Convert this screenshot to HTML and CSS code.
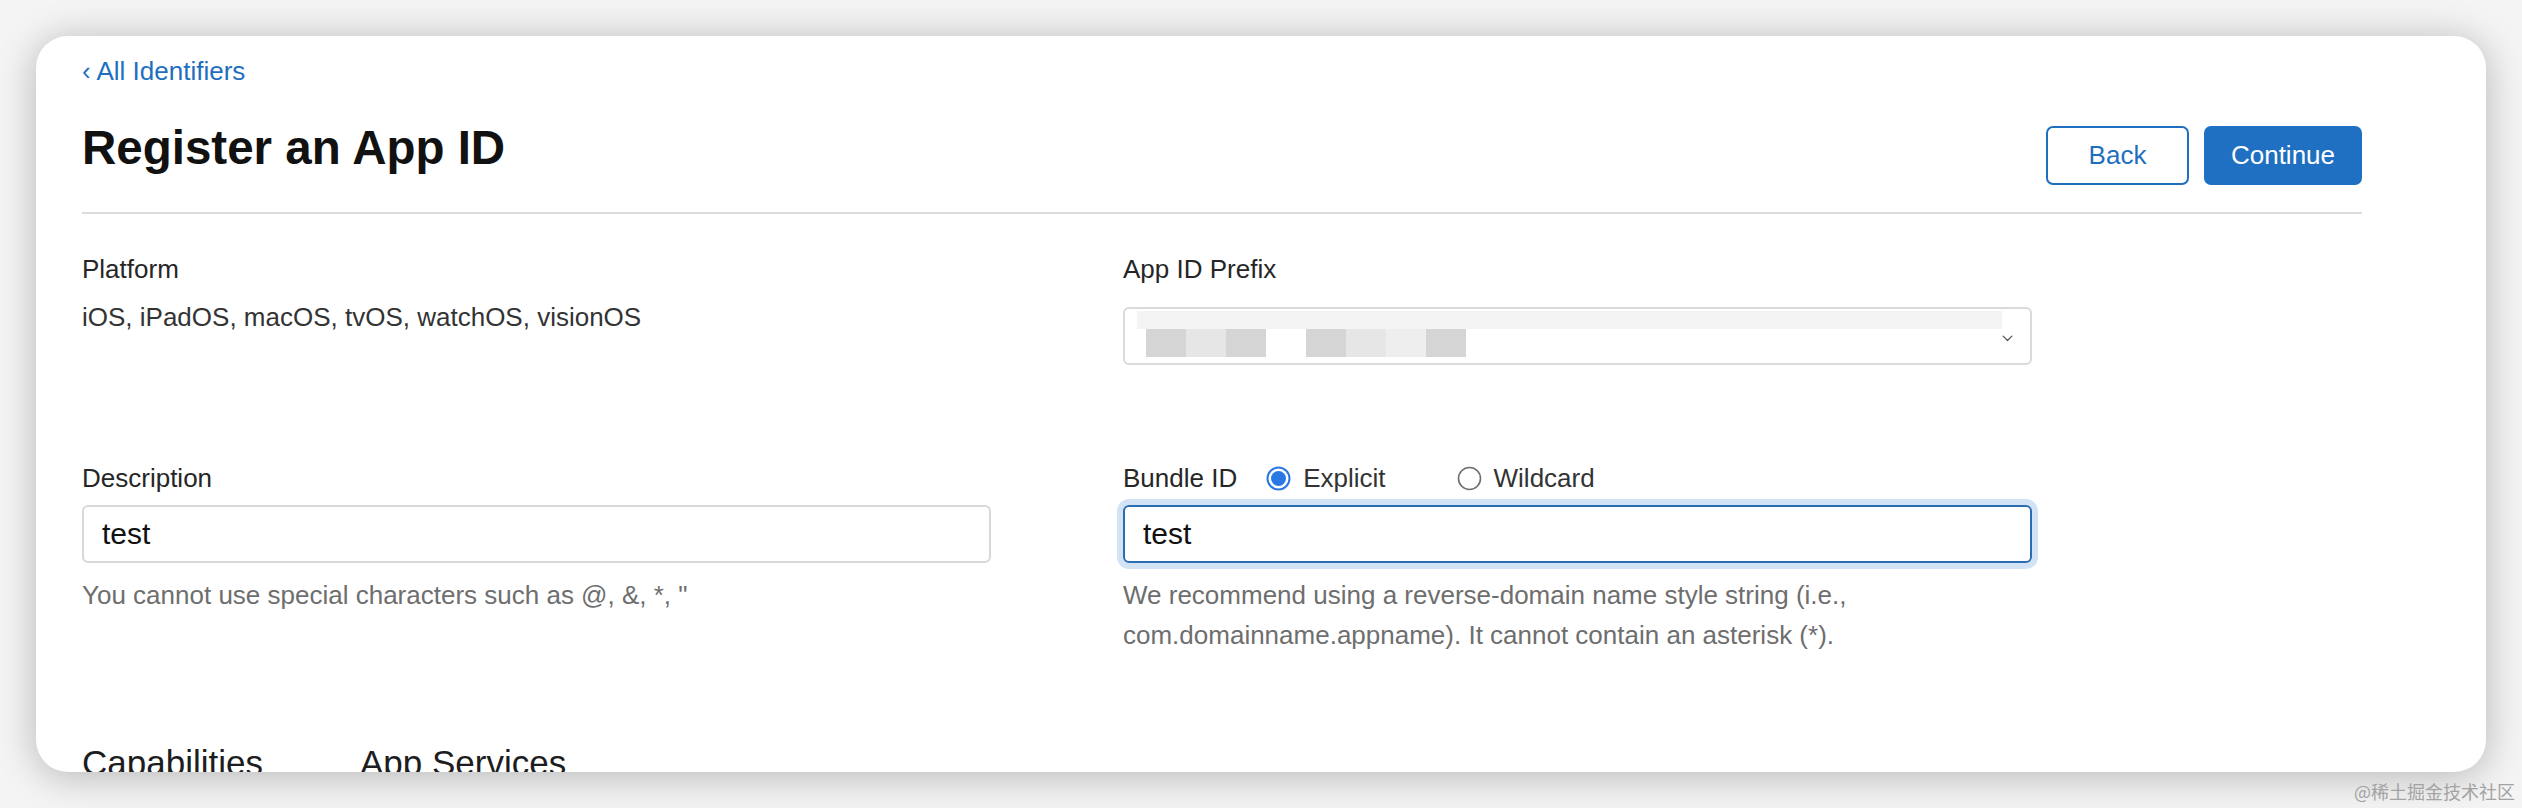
FILE: index.html
```html
<!DOCTYPE html>
<html lang="en">
<head>
<meta charset="utf-8">
<title>Register an App ID</title>
<link rel="stylesheet" href="styles.css">
</head>
<body>
<main class="card">
  <a class="back-link" href="#">&#8249; All Identifiers</a>
  <div class="head">
    <h1 class="title">Register an App ID</h1>
    <div class="actions">
      <button class="btn btn-back">Back</button>
      <button class="btn btn-continue">Continue</button>
    </div>
  </div>
  <div class="divider"></div>

  <div class="form">
    <div class="field">
      <div class="label">Platform</div>
      <div class="value">iOS, iPadOS, macOS, tvOS, watchOS, visionOS</div>
    </div>
    <div class="field">
      <div class="label">App ID Prefix</div>
      <div class="select">
        <div class="redacted">
          <div class="stripe"></div>
          <div class="blocks">
            <span class="blk dark"></span><span class="blk light"></span><span class="blk dark"></span><span class="blk none"></span><span class="blk dark"></span><span class="blk light"></span><span class="blk lighter"></span><span class="blk dark"></span>
          </div>
        </div>
        <svg class="chev" width="14" height="9" viewBox="0 0 14 9"><path d="M1.5 1.5 L7 7 L12.5 1.5" fill="none" stroke="#555" stroke-width="1.6" stroke-linecap="round" stroke-linejoin="round"/></svg>
      </div>
    </div>

    <div class="field">
      <div class="label">Description</div>
      <div class="input">test</div>
      <div class="help">You cannot use special characters such as @, &amp;, *, "</div>
    </div>
    <div class="field">
      <div class="label-row">
        <span class="label">Bundle ID</span>
        <span class="radio radio-first">
          <svg width="25" height="25" viewBox="0 0 25 25"><circle cx="12.5" cy="12.5" r="11" fill="#fff" stroke="#2a78e4" stroke-width="2"/><circle cx="12.5" cy="12.5" r="7.5" fill="#2a78e4"/></svg>
          <span class="radio-text">Explicit</span>
        </span>
        <span class="radio radio-second">
          <svg width="25" height="25" viewBox="0 0 25 25"><circle cx="12.5" cy="12.5" r="11" fill="#fff" stroke="#6f6f6f" stroke-width="1.6"/></svg>
          <span class="radio-text">Wildcard</span>
        </span>
      </div>
      <div class="input input-focus">test</div>
      <div class="help">We recommend using a reverse-domain name style string (i.e.,<br>com.domainname.appname). It cannot contain an asterisk (*).</div>
    </div>
  </div>

  <div class="tabs">
    <span class="tab">Capabilities</span>
    <span class="tab">App Services</span>
  </div>
</main>
<div class="watermark">@稀土掘金技术社区</div>
</body>
</html>
```

FILE: styles.css
```css
html, body {
  margin: 0;
  padding: 0;
}

body {
  width: 2522px;
  height: 808px;
  overflow: hidden;
  position: relative;
  background: #f4f4f4;
  font-family: "Liberation Sans", Arial, "Noto Sans CJK SC", sans-serif;
  color: #333;
}

.card {
  display: block;
  box-sizing: border-box;
  margin: 36px 0 0 36px;
  width: 2450px;
  height: 736px;
  padding: 19px 124px 0 46px;
  background: #fff;
  border-radius: 32px;
  box-shadow: 0 4px 38px rgba(0, 0, 0, 0.26);
  overflow: hidden;
}

.back-link {
  display: block;
  width: max-content;
  font-size: 26px;
  line-height: 32px;
  color: #1f6fbf;
  text-decoration: none;
}

.head {
  display: flex;
  justify-content: space-between;
  align-items: flex-start;
  margin-top: 37px;
}

.title {
  margin: 0;
  font-size: 47.5px;
  line-height: 47px;
  font-weight: 700;
  color: #111;
}

.actions {
  display: flex;
  gap: 15px;
  margin-top: 2px;
}

.btn {
  box-sizing: border-box;
  height: 59px;
  border-radius: 7px;
  border: 2px solid #1f6fbf;
  font-family: "Liberation Sans", Arial, sans-serif;
  font-size: 26px;
  padding: 0;
  cursor: pointer;
}

.btn-back {
  width: 143px;
  background: #fff;
  color: #1f6fbf;
}

.btn-continue {
  width: 158px;
  background: #1f70c2;
  border-color: #1f70c2;
  color: #fff;
}

.divider {
  height: 2px;
  background: #dcdcdc;
  margin-top: 27px;
}

.form {
  display: grid;
  grid-template-columns: 1041px 1fr;
  row-gap: 97px;
  margin-top: 39px;
}

.label {
  font-size: 26px;
  line-height: 32px;
  color: #262626;
}

.value {
  margin-top: 16px;
  font-size: 26px;
  line-height: 32px;
  color: #333;
}

.select {
  box-sizing: border-box;
  display: flex;
  align-items: center;
  margin-top: 22px;
  width: 909px;
  height: 58px;
  border: 2px solid #dadada;
  border-radius: 6px;
  padding: 0 17px 0 12px;
}

.redacted {
  display: flex;
  flex-direction: column;
  align-self: flex-start;
  padding-top: 2px;
}

.stripe {
  width: 865px;
  height: 18px;
  background: #f4f4f4;
}

.blocks {
  display: flex;
  margin-left: 9px;
  height: 28px;
}

.blk {
  width: 40px;
  height: 28px;
}

.blk.dark { background: #d5d5d5; }
.blk.light { background: #e6e6e6; }
.blk.lighter { background: #eeeeee; }
.blk.none { background: transparent; }

.chev {
  margin-left: auto;
  margin-top: 4px;
}

.input {
  box-sizing: border-box;
  margin-top: 11px;
  width: 909px;
  height: 58px;
  border: 2px solid #d8d8d8;
  border-radius: 6px;
  padding-left: 18px;
  font-size: 30px;
  line-height: 54px;
  color: #111;
}

.input-focus {
  border-color: #2a6db3;
  box-shadow: 0 0 0 6px #d3e3f6;
}

.help {
  margin-top: 12px;
  font-size: 26px;
  line-height: 40px;
  color: #6e6e6e;
}

.label-row {
  display: flex;
  align-items: center;
  height: 32px;
}

.radio {
  display: flex;
  align-items: center;
  gap: 12px;
  font-size: 26px;
  line-height: 32px;
  color: #333;
}

.radio svg {
  display: block;
}

.radio-first {
  margin-left: 29px;
}

.radio-second {
  margin-left: 71px;
}

.tabs {
  display: flex;
  gap: 97px;
  margin-top: 87px;
  font-size: 35px;
  line-height: 42px;
  color: #1d1d1f;
}

.watermark {
  position: absolute;
  right: 7px;
  bottom: 5px;
  font-family: "Noto Sans CJK SC", sans-serif;
  font-size: 18px;
  line-height: 24px;
  color: #a3a3a3;
}
```
